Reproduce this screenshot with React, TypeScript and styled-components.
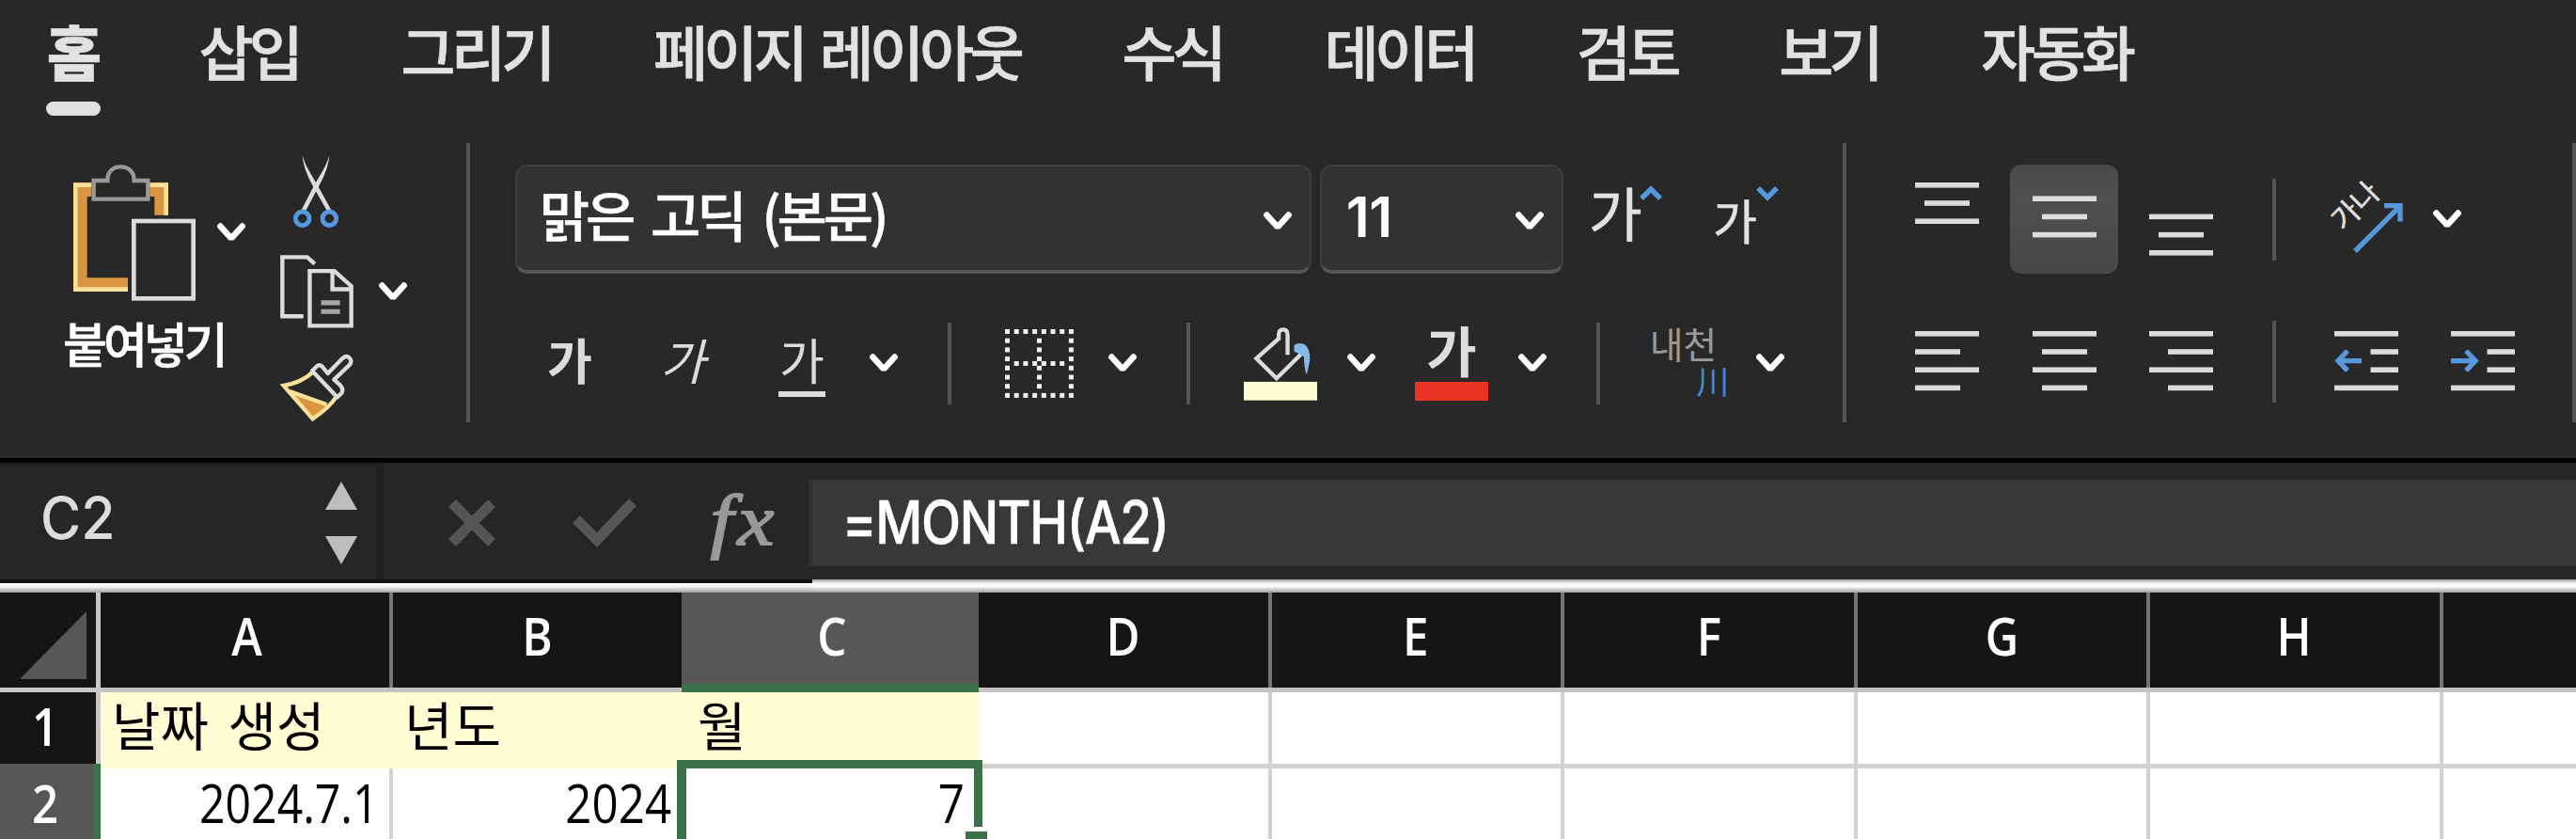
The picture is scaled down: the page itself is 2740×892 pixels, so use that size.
import * as React from "react";
import styled, { createGlobalStyle, css } from "styled-components";

const KOREAN = `"Noto Sans CJK KR", "Noto Sans", sans-serif`;
const LATIN = `Inter, "Noto Sans CJK KR", sans-serif`;
const SHEET = `"Open Sans", "Noto Sans CJK KR", sans-serif`;

const LIGHT = "#dcdcdc";
const BLUE = "#5599dc";

const tabs = [
  "홈",
  "삽입",
  "그리기",
  "페이지 레이아웃",
  "수식",
  "데이터",
  "검토",
  "보기",
  "자동화",
];

const columns = ["A", "B", "C", "D", "E", "F", "G", "H", ""];

/* ---------- icons ---------- */

const Chevron = () => (
  <svg width="30" height="21" viewBox="0 0 30 21" fill="none">
    <path
      d="M3.4 3.6 15 16.4 26.6 3.6"
      stroke="#fff"
      strokeWidth="6.6"
      strokeLinecap="round"
      strokeLinejoin="bevel"
    />
  </svg>
);

const Caret: React.FC<{ down?: boolean }> = ({ down }) => (
  <svg width="24" height="16" viewBox="0 0 24 16" fill="none">
    <path
      d={down ? "M2 2 12 12 22 2" : "M2 13 12 3 22 13"}
      stroke={BLUE}
      strokeWidth="5.4"
    />
  </svg>
);

const PasteIcon = () => (
  <svg width="130" height="145" viewBox="114 75 390 435" fill="none">
    <path d="M172 133H114V480H288V436H158V177H172Z" fill="#d9953f" />
    <path d="M358 133H417V236H373V177H358Z" fill="#d9953f" />
    <path d="M172 140H121V473H288" stroke="#fbe09a" strokeWidth="14" />
    <path d="M358 140H410V236" stroke="#fbe09a" strokeWidth="14" />
    <path
      d="M179 126H223C222 98 240 82 265 82S308 98 308 126H352V185H179Z"
      stroke="#999"
      strokeWidth="13"
    />
    <rect x="307" y="255" width="190" height="247" stroke={LIGHT} strokeWidth="14" />
  </svg>
);

const CutIcon = () => (
  <svg width="50" height="78" viewBox="816 47 150 234" fill="none">
    <path d="M848 47C850 85 870 125 884 150L925 222H940L900 150C880 112 858 85 848 47Z" fill={LIGHT} />
    <path d="M934 47C932 85 912 125 898 150L860 222H845L882 150C902 112 924 85 934 47Z" fill={LIGHT} />
    <circle cx="848" cy="249" r="22" stroke={BLUE} strokeWidth="15" />
    <circle cx="934" cy="249" r="22" stroke={BLUE} strokeWidth="15" />
  </svg>
);

const CopyIcon = () => (
  <svg width="78" height="78" viewBox="774 363 233 233" fill="none">
    <g stroke={LIGHT} strokeWidth="13">
      <path d="M884 392 860 370H781V558H848" />
      <path d="M868 414H946L1000 462V588H868Z" />
      <path d="M940 414V472H1000" />
    </g>
    <path d="M904 515H964M904 543H964" stroke="#a6a6a6" strokeWidth="15" />
  </svg>
);

const BrushIcon = () => (
  <svg width="78" height="73" viewBox="774 679 234 219" fill="none">
    <path d="M804 792 878 886 924 842Z" fill="#d9953f" />
    <path
      d="M878 738C850 765 820 775 785 781L878 887C905 868 935 845 952 818M806 800 922 841"
      stroke="#fbe09a"
      strokeWidth="13"
    />
    <path
      d="M876 734 890 720Q899 712 908 720L926 742 972 695Q984 683 995 692 1005 703 995 715L946 762 966 780Q977 792 970 805L956 818Z"
      stroke={LIGHT}
      strokeWidth="13"
      strokeLinejoin="round"
    />
  </svg>
);

const STEP = 9.7;
const eight = [0, 1, 2, 3, 4, 5, 6, 7];

// the middle row and column fall between dots, so their crossing leaves a small diamond
const BorderIcon = () => {
  const dots: [number, number][] = [];
  eight.forEach((i) => {
    dots.push([i * STEP, 0], [i * STEP, 7 * STEP]);
    if (i > 0 && i < 7) {
      dots.push([0, i * STEP], [7 * STEP, i * STEP]);
      dots.push([3.5 * STEP, i * STEP], [i * STEP, 3.5 * STEP]);
    }
  });
  return (
    <svg width="73" height="73" viewBox="0 0 73 73">
      {dots.map(([x, y]) => (
        <rect key={`${x}-${y}`} x={x} y={y} width="5" height="5" fill="#f0f0f0" />
      ))}
    </svg>
  );
};

const FillIcon = () => (
  <svg width="78" height="79" viewBox="40 50 233 236" fill="none">
    <path
      d="M152 88 80 152 144 215 222 138M151 94V76Q151 60 165 60 179 60 179 76V140"
      stroke={LIGHT}
      strokeWidth="13"
    />
    <path
      d="M200 110Q214 99 232 107 251 117 250 158L240 203Q232 188 231 146 214 136 200 130Z"
      fill="#86b8e8"
    />
    <rect x="40" y="226" width="233" height="59" fill="#fffed4" />
  </svg>
);

type Line = [x: number, y: number, width: number];

const Lines: React.FC<{ rows: Line[]; height: number; children?: React.ReactNode }> = ({
  rows,
  height,
  children,
}) => (
  <svg width="68" height={height} viewBox={`0 0 68 ${height}`} fill="none">
    {rows.map(([x, y, width]) => (
      <rect key={y} x={x} y={y} width={width} height="5.6" fill={LIGHT} />
    ))}
    {children}
  </svg>
);

const vertical = (top: number): Line[] => [
  [0, top, 68],
  [10, top + 19.2, 48],
  [0, top + 38.4, 68],
];

const horizontal = (offset: number): Line[] => [
  [0, 0, 68],
  [offset, 19.2, 48],
  [0, 38.4, 68],
  [offset, 57.6, 48],
];

const indent: Line[] = [
  [0, 0, 68],
  [38.5, 19.2, 29.5],
  [38.5, 38.4, 29.5],
  [0, 57.6, 68],
];

const OrientationIcon = () => (
  <svg width="80" height="75" viewBox="0 0 80 75" fill="none">
    <text
      x="0"
      y="0"
      transform="translate(16 51) rotate(-45)"
      fill={LIGHT}
      fontSize="31"
      fontFamily={KOREAN}
      fontWeight="500"
    >
      가나
    </text>
    <path d="M28 71 76 23" stroke={BLUE} strokeWidth="5.4" />
    <path d="M59 22.6H76V39.5" stroke={BLUE} strokeWidth="5.4" />
  </svg>
);

/* ---------- page ---------- */

const App: React.FC = () => (
  <Window>
    <GlobalStyle />

    <TabBar>
      {tabs.map((tab, i) => (
        <Tab key={tab} $active={i === 0}>
          {tab}
        </Tab>
      ))}
    </TabBar>

    <Ribbon>
      <Clipboard>
        <PasteColumn>
          <PasteRow>
            <PasteIcon />
            <Chevron />
          </PasteRow>
          <PasteLabel>붙여넣기</PasteLabel>
        </PasteColumn>
        <ClipColumn>
          <CutButton>
            <CutIcon />
          </CutButton>
          <CopyRow>
            <CopyIcon />
            <Chevron />
          </CopyRow>
          <BrushIcon />
        </ClipColumn>
      </Clipboard>

      <GroupLine />

      <FontGroup>
        <SelectRow>
          <Select $width={847}>
            <FontName>맑은 고딕 (본문)</FontName>
            <Chevron />
          </Select>
          <Select $width={259}>
            <FontSize>11</FontSize>
            <Chevron />
          </Select>
          <Resize $gap={18} $size={62}>
            <span>가</span>
            <Caret />
          </Resize>
          <Resize $gap={54} $size={51}>
            <span>가</span>
            <Caret down />
          </Resize>
        </SelectRow>
        <ToolRow>
          <Letter $gap={33} $weight={700}>
            가
          </Letter>
          <Letter $gap={70} $weight={400} $italic>
            가
          </Letter>
          <Letter $gap={77} $weight={400} $underline>
            가
          </Letter>
          <Tool $gap={47}>
            <Chevron />
          </Tool>
          <ToolLine $gap={53} />
          <Tool $gap={57}>
            <BorderIcon />
          </Tool>
          <Tool $gap={37}>
            <Chevron />
          </Tool>
          <ToolLine $gap={53} />
          <Tool $gap={57}>
            <FillIcon />
          </Tool>
          <Tool $gap={32}>
            <Chevron />
          </Tool>
          <FontColor>가</FontColor>
          <Tool $gap={32}>
            <Chevron />
          </Tool>
          <ToolLine $gap={53} />
          <Phonetic>
            <span>내천</span>
            <em>川</em>
          </Phonetic>
          <Tool $gap={29}>
            <Chevron />
          </Tool>
        </ToolRow>
      </FontGroup>

      <GroupLine />

      <AlignGroup>
        <AlignRow>
          <AlignButton>
            <Lines height={78} rows={vertical(0)} />
          </AlignButton>
          <AlignButton $active>
            <Lines height={78} rows={vertical(14.4)} />
          </AlignButton>
          <AlignButton>
            <Lines height={78} rows={vertical(33.6)} />
          </AlignButton>
          <ToolLine $gap={30} />
          <Tool $gap={56}>
            <OrientationIcon />
          </Tool>
          <Tool $gap={31}>
            <Chevron />
          </Tool>
        </AlignRow>
        <AlignRow $lower>
          <AlignButton>
            <Lines height={64} rows={horizontal(0)} />
          </AlignButton>
          <AlignButton>
            <Lines height={64} rows={horizontal(10)} />
          </AlignButton>
          <AlignButton>
            <Lines height={64} rows={horizontal(20)} />
          </AlignButton>
          <ToolLine $gap={30} />
          <Tool $gap={62}>
            <Lines height={64} rows={indent}>
              <path d="M29 31.6H4M14 21 4 31.6 14 42.2" stroke={BLUE} strokeWidth="5.4" />
            </Lines>
          </Tool>
          <Tool $gap={56}>
            <Lines height={64} rows={indent}>
              <path d="M0 31.6H26M16 21 26 31.6 16 42.2" stroke={BLUE} strokeWidth="5.4" />
            </Lines>
          </Tool>
        </AlignRow>
      </AlignGroup>

      <GroupLine />
    </Ribbon>

    <FormulaBar>
      <NameBox>
        <CellName>C2</CellName>
        <svg width="34" height="88" viewBox="0 0 34 88" fill="#bdbdbd">
          <path d="M17 0 34 30H0ZM17 88 0 58H34Z" />
        </svg>
      </NameBox>
      <FormulaActions>
        <svg width="50" height="50" viewBox="0 0 50 50" stroke="#555" strokeWidth="11">
          <path d="M4 4 46 46M46 4 4 46" />
        </svg>
        <svg width="68" height="52" viewBox="0 0 68 52" fill="none" stroke="#555" strokeWidth="11">
          <path d="M4 22 26 44 64 4" />
        </svg>
        <Fx>
          <i>f</i>
          <i>x</i>
        </Fx>
      </FormulaActions>
      <FormulaInput>
        <span>=MONTH(A2)</span>
      </FormulaInput>
    </FormulaBar>
    <Divider>
      <DividerStart />
      <DividerEnd />
    </Divider>

    <Sheet>
      <Corner>
        <svg width="71" height="72" viewBox="0 0 71 72">
          <path d="M71 0V72H0Z" fill="#575757" />
        </svg>
      </Corner>
      {columns.map((name, i) => (
        <ColumnHeader
          key={i}
          $active={name === "C"}
          $plain={name === "B" || name === ""}
          $shift={i < 2 ? 0 : 5}
        >
          <Narrow>{name}</Narrow>
        </ColumnHeader>
      ))}

      <RowHeader>
        <Narrow>1</Narrow>
      </RowHeader>
      <TitleCell>날짜 생성</TitleCell>
      <TitleCell>년도</TitleCell>
      <TitleCell $inset={17}>월</TitleCell>
      {columns.slice(3).map((name) => (
        <Cell key={name} $ruled $plain={name === ""} />
      ))}

      <RowHeader $active>
        <Narrow>2</Narrow>
      </RowHeader>
      <Cell>
        <Narrow $end $scale={0.86}>
          2024.7.1
        </Narrow>
      </Cell>
      <Cell $plain>
        <Narrow $end>2024</Narrow>
      </Cell>
      <SelectedCell>
        <Narrow $end>7</Narrow>
        <FillHandle />
      </SelectedCell>
      {columns.slice(3).map((name) => (
        <Cell key={name} $plain={name === ""} />
      ))}
    </Sheet>
  </Window>
);

export default App;

const GlobalStyle = createGlobalStyle`
  body {
    background: #282828;
    margin: 0;
    overflow: hidden;
  }

  * {
    box-sizing: border-box;
  }

  svg {
    display: block;
    flex: none;
    overflow: visible;
  }
`;

const Window = styled.div`
  background: #282828;
  display: flex;
  flex-direction: column;
  font-family: ${KOREAN};
  height: 892px;
  overflow: hidden;
  white-space: nowrap;
  width: 2740px;
`;

const TabBar = styled.nav`
  display: flex;
  flex: none;
  gap: 108.4px;
  height: 152px;
  padding-left: 50px;
`;

const Tab = styled.div<{ $active: boolean }>`
  -webkit-text-stroke: 0.7px #e2e2e2;
  color: #e2e2e2;
  font-size: 63px;
  font-weight: ${({ $active }) => ($active ? 900 : 500)};
  letter-spacing: -4.6px;
  line-height: 105px;
  margin-right: ${({ $active }) => ($active ? -4 : 0)}px;
  word-spacing: 7px;

  ${({ $active }) =>
    $active &&
    css`
      &::after {
        background: #e0e0e0;
        border-radius: 8px;
        content: "";
        display: block;
        height: 15px;
        margin: 3px 0 0 -1px;
        width: 58px;
      }
    `}
`;

const Ribbon = styled.section`
  border-bottom: 5px solid #000;
  display: flex;
  flex: none;
  height: 340px;
`;

const GroupLine = styled.div`
  background: #555;
  flex: none;
  height: 297px;
  width: 4px;
`;

const Clipboard = styled.div`
  display: flex;
  padding-left: 68px;
  width: 496px;
`;

const PasteColumn = styled.div`
  padding-top: 23px;
  width: 230px;
`;

const PasteRow = styled.div`
  align-items: center;
  display: flex;
  gap: 23px;
  padding-left: 10px;
`;

const PasteLabel = styled.div`
  -webkit-text-stroke: 0.6px #fff;
  color: #fff;
  font-size: 51px;
  font-weight: 500;
  letter-spacing: -4px;
  line-height: 60px;
  margin: 14px 0 0 -1px;
`;

const ClipColumn = styled.div`
  display: flex;
  flex-direction: column;
  padding-top: 13px;
`;

const CutButton = styled.div`
  padding-left: 13px;
`;

const CopyRow = styled.div`
  align-items: center;
  display: flex;
  gap: 27px;
  margin: 28px 0 27px;
`;

const FontGroup = styled.div`
  padding: 23px 0 0 48px;
  width: 1461px;
`;

const SelectRow = styled.div`
  display: flex;
  height: 116px;
`;

const Select = styled.div<{ $width: number }>`
  align-items: center;
  background: #323232;
  border: 2px solid #3e3e3e;
  border-bottom: 4px solid #565656;
  border-radius: 13px;
  color: #fff;
  display: flex;
  justify-content: space-between;
  margin-right: 9px;
  padding: 6px 19px 0 26px;
  width: ${({ $width }) => $width}px;
`;

const FontName = styled.span`
  -webkit-text-stroke: 0.5px #fff;
  font-size: 58px;
  font-weight: 500;
  letter-spacing: -4.2px;
  line-height: 80px;
  margin: 0 0 16px -2px;
  word-spacing: 11px;
`;

const FontSize = styled.span`
  font-family: ${LATIN};
  font-size: 59px;
  font-weight: 600;
  letter-spacing: -0.5px;
  line-height: 80px;
  margin-bottom: 8px;
`;

const Resize = styled.div<{ $gap: number; $size: number }>`
  align-items: flex-start;
  color: #e2e2e2;
  display: flex;
  height: 116px;
  margin-left: ${({ $gap }) => $gap}px;
  padding-top: 23px;

  & span {
    -webkit-text-stroke: 0.5px #e2e2e2;
    font-size: ${({ $size }) => $size}px;
    height: 60px;
    letter-spacing: ${({ $size }) => ($size > 60 ? -3 : -0.5)}px;
    line-height: ${({ $size }) => 116 - $size}px;
    padding-top: ${({ $size }) => ($size > 60 ? 0 : 3)}px;
  }
`;

const ToolRow = styled.div`
  align-items: center;
  display: flex;
  height: 86px;
  margin-top: 52px;
`;

const Tool = styled.div<{ $gap: number }>`
  margin-left: ${({ $gap }) => $gap}px;
`;

const ToolLine = styled.div<{ $gap: number }>`
  background: #555;
  height: 87px;
  margin-left: ${({ $gap }) => $gap}px;
  width: 4px;
`;

const Letter = styled.div<{
  $gap: number;
  $weight: number;
  $italic?: boolean;
  $underline?: boolean;
}>`
  border-bottom: 6px solid ${({ $underline }) => ($underline ? LIGHT : "transparent")};
  color: ${LIGHT};
  font-size: 52px;
  font-style: ${({ $italic }) => ($italic ? "italic" : "normal")};
  font-weight: ${({ $weight }) => $weight};
  height: 72px;
  line-height: 64px;
  margin-left: ${({ $gap }) => $gap}px;
  text-align: center;
  width: 50px;
`;

const FontColor = styled.div`
  border-bottom: 20px solid #e93323;
  color: ${LIGHT};
  font-size: 58px;
  font-weight: 700;
  height: 79px;
  line-height: 48px;
  margin-left: 42px;
  text-align: center;
  width: 78px;
`;

const Phonetic = styled.div`
  color: #9a9a9a;
  display: flex;
  flex-direction: column;
  font-size: 39px;
  font-weight: 400;
  letter-spacing: -0.5px;
  line-height: 36px;
  margin-left: 53px;
  width: 84px;

  & em {
    align-self: flex-end;
    color: #4a88c4;
    font-size: 35px;
    font-style: normal;
    line-height: 44px;
  }
`;

const AlignGroup = styled.div`
  padding: 23px 0 0 49px;
  width: 772px;
`;

const AlignRow = styled.div<{ $lower?: boolean }>`
  align-items: center;
  display: flex;
  height: ${({ $lower }) => ($lower ? 86 : 116)}px;
  margin-top: ${({ $lower }) => ($lower ? 50 : 0)}px;
`;

const AlignButton = styled.div<{ $active?: boolean }>`
  align-items: center;
  background: ${({ $active }) =>
    $active ? "linear-gradient(#484848, #505050 30%, #474747)" : "none"};
  border-radius: 12px;
  display: flex;
  height: 100%;
  justify-content: center;
  margin-right: 9px;
  width: 115.5px;
`;

const FormulaBar = styled.section`
  background: #262626;
  display: flex;
  flex: none;
  height: 124px;
`;

const NameBox = styled.div`
  align-items: center;
  border: solid #202020;
  border-width: 4px 8px 0 0;
  display: flex;
  justify-content: space-between;
  padding: 0 20px 0 43px;
  width: 408px;
`;

const CellName = styled.span`
  color: #dcdcdc;
  font-family: ${LATIN};
  font-size: 62px;
  font-weight: 500;
  line-height: 76px;
  margin-bottom: 11px;
  transform: scaleX(0.95);
  transform-origin: left;
`;

const FormulaActions = styled.div`
  align-items: center;
  display: flex;
  gap: 82px;
  padding: 4px 0 0 69px;
  width: 452px;
`;

const Fx = styled.span`
  -webkit-text-stroke: 1.8px #999;
  color: #999;
  display: flex;
  font-family: "Liberation Serif", serif;
  font-size: 76px;
  gap: 4px;
  line-height: 80px;
  margin: -6px 0 0 1px;
  transform: scaleX(1.15);
`;

const FormulaInput = styled.div`
  align-items: center;
  background: #383838;
  border-left: 4px solid #303030;
  color: #fff;
  display: flex;
  flex: 1;
  font-family: ${LATIN};
  font-size: 63px;
  font-weight: 500;
  height: 92px;
  margin-top: 18px;
  padding-left: 32px;

  & span {
    -webkit-text-stroke: 0.6px #fff;
    letter-spacing: -1.5px;
    margin-bottom: 2px;
    transform: scaleX(0.87);
    transform-origin: left;
  }
`;

const Divider = styled.div`
  display: flex;
  flex: none;
  height: 14px;
`;

const DividerStart = styled.div`
  background: linear-gradient(#111 0 4px, #fff 4px, #f0f0f0 8px, #a0a0a0 14px);
  width: 864px;
`;

const DividerEnd = styled.div`
  background: linear-gradient(#999, #f0f0f0 4px, #fff 7px, #a0a0a0 14px);
  flex: 1;
`;

const Sheet = styled.section`
  background: #fff;
  display: grid;
  flex: none;
  font-family: ${SHEET};
  font-size: 56px;
  grid-template-columns: 107px 311px 307px 316px 312px 311px 312px 311px 312px 1fr;
  grid-template-rows: 106px 81px 81px;
`;

const Narrow = styled.span<{ $end?: boolean; $scale?: number }>`
  display: inline-block;
  transform: scaleX(${({ $scale = 0.88 }) => $scale});
  transform-origin: ${({ $end }) => ($end ? "right" : "center")};
`;

const Corner = styled.div`
  background: #151515;
  border: solid #c9c7c5;
  border-width: 0 5px 5px 0;
  padding: 20px 0 0 21px;
`;

const ColumnHeader = styled.div<{ $active: boolean; $plain: boolean; $shift: number }>`
  background: ${({ $active }) => ($active ? "#575757" : "#151515")};
  border-bottom: ${({ $active }) => ($active ? "9px solid #3b7249" : "5px solid #c4c1be")};
  color: #fff;
  font-weight: 600;
  line-height: 91px;
  padding: ${({ $active, $shift }) => ($active ? "0 0 0 4px" : `0 ${$shift}px 0 0`)};
  text-align: center;

  /* the column rule stops above the header's bottom line */
  background-image: ${({ $active, $plain }) =>
    $active || $plain ? "none" : "linear-gradient(#757575, #757575)"};
  background-position: right top;
  background-repeat: no-repeat;
  background-size: 4px 100%;
`;

const RowHeader = styled.div<{ $active?: boolean }>`
  background: ${({ $active }) => ($active ? "#575757" : "#151515")};
  border-right: ${({ $active }) => ($active ? "8px solid #3b7249" : "5px solid #c9c7c5")};
  color: #fff;
  font-weight: 600;
  line-height: ${({ $active }) => ($active ? 82 : 70)}px;
  margin-top: ${({ $active }) => ($active ? -5 : 0)}px;
  padding-right: ${({ $active }) => ($active ? 2 : 5)}px;
  text-align: center;
`;

const Cell = styled.div<{ $ruled?: boolean; $plain?: boolean }>`
  border-bottom: ${({ $ruled }) => ($ruled ? "5px solid #d2d2d2" : "none")};
  border-right: ${({ $plain }) => ($plain ? "none" : "4px solid #d2d2d2")};
  color: #000;
  line-height: 72px;
  padding-right: 11px;
  text-align: right;
`;

const TitleCell = styled.div<{ $inset?: number }>`
  background: #fffed4;
  color: #000;
  font-family: ${KOREAN};
  line-height: 66px;
  padding-left: ${({ $inset = 12 }) => $inset}px;
  word-spacing: 8px;
`;

const SelectedCell = styled.div`
  color: #000;
  line-height: 72px;
  padding-right: 15px;
  position: relative;
  text-align: right;

  &::before {
    border: solid #3b7249;
    border-width: 9px 9px 0 10px;
    bottom: 0;
    content: "";
    left: -5px;
    position: absolute;
    right: -4px;
    top: -9px;
  }
`;

const FillHandle = styled.div`
  background: #3b7249;
  border: 5px solid #fff;
  height: 30px;
  position: absolute;
  right: -14px;
  top: 62px;
  width: 33px;
`;
